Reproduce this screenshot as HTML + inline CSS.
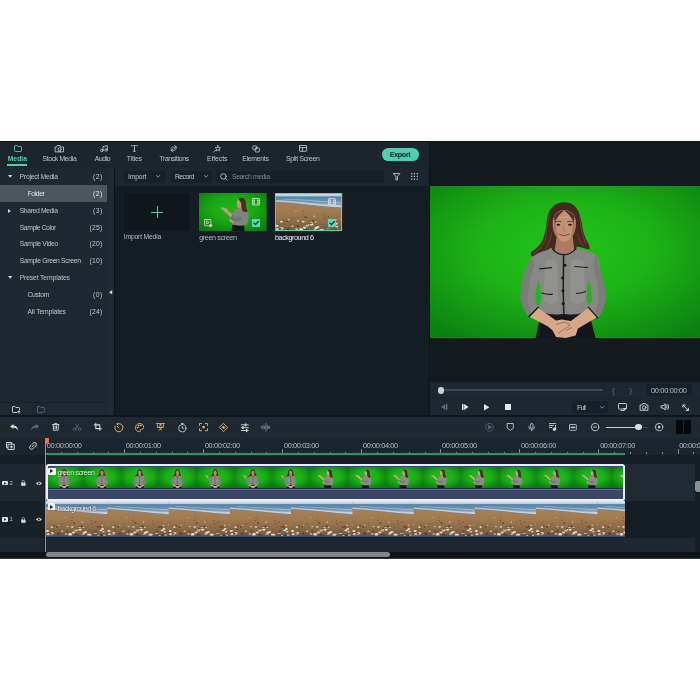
<!DOCTYPE html>
<html><head><meta charset="utf-8"><title>Video Editor</title>
<style>
html,body{margin:0;padding:0;background:#fff;}
body{width:700px;height:700px;position:relative;overflow:hidden;font-family:"Liberation Sans",sans-serif;}
#a div,#a span,#a svg{position:absolute;}
#a span{white-space:nowrap;line-height:1;}
#a{will-change:transform;}
#a svg{overflow:visible;}
</style></head><body><div id="a">
<div style="left:0px;top:140.8px;width:700px;height:417.9px;background:#151d24;"></div>
<div style="left:0px;top:141px;width:429px;height:27px;background:#1c242c;"></div>
<div style="left:0px;top:140.8px;width:700px;height:0.9px;background:#0e1419;"></div>
<div style="left:0px;top:168px;width:114px;height:247px;background:#1e2831;"></div>
<div style="left:107px;top:168px;width:7px;height:247px;background:#202a33;"></div>
<div style="left:0px;top:185.2px;width:107px;height:16.5px;background:#4e565d;"></div>
<div style="left:114px;top:168px;width:1px;height:247px;background:#0d1318;"></div>
<div style="left:115px;top:168px;width:314px;height:17.5px;background:#1c262e;"></div>
<div style="left:115px;top:185.5px;width:314px;height:229.5px;background:#151d24;"></div>
<div style="left:429px;top:141px;width:1.1px;height:275px;background:#0d1318;"></div>
<div style="left:430px;top:141px;width:270px;height:241.5px;background:#131a20;"></div>
<div style="left:430px;top:382px;width:270px;height:33.6px;background:#1d2730;"></div>
<div style="left:430px;top:398px;width:270px;height:0.7px;background:#1a232b;"></div>
<div style="left:0px;top:415px;width:700px;height:1.8px;background:#0f161b;"></div>
<div style="left:0px;top:417px;width:700px;height:21px;background:#1e2830;"></div>
<div style="left:0px;top:438px;width:700px;height:17px;background:#1c252d;"></div>
<div style="left:0px;top:455px;width:700px;height:9px;background:#161e25;"></div>
<div style="left:0px;top:464px;width:45px;height:37px;background:#1e2831;"></div>
<div style="left:45px;top:464px;width:655px;height:37px;background:#202a33;"></div>
<div style="left:0px;top:501px;width:45px;height:37px;background:#182028;"></div>
<div style="left:45px;top:501px;width:655px;height:37px;background:#161e25;"></div>
<div style="left:0px;top:538px;width:700px;height:14px;background:#1e2831;"></div>
<div style="left:0px;top:552px;width:700px;height:6.7px;background:#0e1419;"></div>
<div style="left:0px;top:557.6px;width:700px;height:1.1px;background:#2b353d;"></div>
<div style="left:44px;top:455px;width:1.5px;height:97px;background:#141b21;"></div>
<span style="left:7.70px;top:155.78px;font-size:6.8px;letter-spacing:0.007px;color:#4fcdaa;font-weight:700;">Media</span>
<div style="left:7.4px;top:164.3px;width:19.8px;height:1.7px;background:#4fcdaa;"></div>
<span style="left:42.50px;top:155.78px;font-size:6.8px;letter-spacing:-0.312px;color:#bec4c8;">Stock Media</span>
<span style="left:94.80px;top:155.78px;font-size:6.8px;letter-spacing:-0.398px;color:#bec4c8;">Audio</span>
<span style="left:126.80px;top:155.78px;font-size:6.8px;letter-spacing:-0.159px;color:#bec4c8;">Titles</span>
<span style="left:159.40px;top:155.78px;font-size:6.8px;letter-spacing:-0.320px;color:#bec4c8;">Transitions</span>
<span style="left:207.00px;top:155.78px;font-size:6.8px;letter-spacing:-0.027px;color:#bec4c8;">Effects</span>
<span style="left:242.30px;top:155.78px;font-size:6.8px;letter-spacing:-0.249px;color:#bec4c8;">Elements</span>
<span style="left:286.00px;top:155.78px;font-size:6.8px;letter-spacing:-0.260px;color:#bec4c8;">Split Screen</span>
<svg style="left:13.5px;top:145px;" width="8" height="7" viewBox="0 0 8 7"><g fill="none" stroke="#4fcdaa" stroke-width="0.9" stroke-linecap="round" stroke-linejoin="round"><path d="M0.5 1.2 Q0.5 0.5 1.2 0.5 H3 L3.8 1.5 H6.8 Q7.5 1.5 7.5 2.2 V5.8 Q7.5 6.5 6.8 6.5 H1.2 Q0.5 6.5 0.5 5.8 Z"/></g></svg>
<svg style="left:55.3px;top:144.6px;" width="9" height="7.4" viewBox="0 0 9 7.4"><g fill="none" stroke="#bec4c8" stroke-width="0.9" stroke-linecap="round" stroke-linejoin="round"><path d="M0.5 2 H1.6 L2.2 0.6 H5 L5.6 2 H8.5 V6.9 H0.5 Z"/><circle cx="4.5" cy="4.3" r="1.6"/><path d="M3.4 6.6 Q4.5 5.4 5.6 6.6"/></g></svg>
<svg style="left:99.5px;top:144.8px;" width="8" height="6.8" viewBox="0 0 8 6.8"><g fill="none" stroke="#bec4c8" stroke-width="0.9" stroke-linecap="round" stroke-linejoin="round"><path d="M3 5.3 V1.6 L7.3 0.6 V4.8"/><ellipse cx="1.8" cy="5.5" rx="1.3" ry="1.1"/><ellipse cx="6.1" cy="5" rx="1.3" ry="1.1"/></g></svg>
<span style="left:130.9px;top:142.6px;font-size:11px;font-family:'Liberation Serif',serif;color:#bec4c8">T</span>
<svg style="left:170px;top:144.8px;" width="7.5" height="7.4" viewBox="0 0 7.5 7.4"><g fill="none" stroke="#bec4c8" stroke-width="0.8" stroke-linecap="round" stroke-linejoin="round"><path d="M4.6 0.6 L6.6 2.2 L4.6 3.6 M6.4 2.2 H2.4 L1 3.6 M2.9 6.8 L0.9 5.2 L2.9 3.8 M1.1 5.2 H5.1 L6.5 3.8"/></g></svg>
<svg style="left:212.6px;top:144.6px;" width="8" height="7.6" viewBox="0 0 8 7.6"><g fill="none" stroke="#bec4c8" stroke-width="0.8" stroke-linecap="round" stroke-linejoin="round"><path d="M4.8 0.6 L5.6 2.6 L7.5 2.6 L6 4 L6.6 6 L4.8 4.9 L3.1 6 L3.6 4 L2.2 2.6 L4.1 2.6 Z M2.8 5 L0.6 7.2"/></g></svg>
<svg style="left:251.6px;top:144.6px;" width="8" height="7.6" viewBox="0 0 8 7.6"><g fill="none" stroke="#bec4c8" stroke-width="0.85" stroke-linecap="round" stroke-linejoin="round"><circle cx="2.8" cy="2.8" r="2.2"/><rect x="3.2" y="3" width="4.2" height="4" rx="0.8"/></g></svg>
<svg style="left:299px;top:145px;" width="8.2" height="6.8" viewBox="0 0 8.2 6.8"><g fill="none" stroke="#bec4c8" stroke-width="0.85" stroke-linecap="round" stroke-linejoin="round"><rect x="0.5" y="0.5" width="7.2" height="5.8" rx="0.4"/><path d="M0.5 2.6 H7.7 M3.4 2.6 V6.3"/></g></svg>
<div style="left:381.8px;top:148.2px;width:36.8px;height:12.8px;background:#4ed0ae;border-radius:6.4px;"></div>
<span style="left:389.70px;top:151.17px;font-size:7.2px;letter-spacing:-0.341px;color:#10201f;font-weight:700;">Export</span>
<span style="left:19.60px;top:174.28px;font-size:6.8px;letter-spacing:-0.256px;color:#bec4c8;">Project Media</span>
<span style="left:93.10px;top:174.28px;font-size:6.8px;letter-spacing:0.444px;color:#bec4c8;">(2)</span>
<span style="left:27.50px;top:190.88px;font-size:6.8px;letter-spacing:-0.395px;color:#e4e6e8;">Folder</span>
<span style="left:93.10px;top:190.88px;font-size:6.8px;letter-spacing:0.444px;color:#e4e6e8;">(2)</span>
<span style="left:19.70px;top:207.88px;font-size:6.8px;letter-spacing:-0.367px;color:#bec4c8;">Shared Media</span>
<span style="left:93.10px;top:207.88px;font-size:6.8px;letter-spacing:0.444px;color:#bec4c8;">(3)</span>
<span style="left:19.70px;top:224.68px;font-size:6.8px;letter-spacing:-0.427px;color:#bec4c8;">Sample Color</span>
<span style="left:89.50px;top:224.68px;font-size:6.8px;letter-spacing:0.236px;color:#bec4c8;">(25)</span>
<span style="left:19.70px;top:241.48px;font-size:6.8px;letter-spacing:-0.329px;color:#bec4c8;">Sample Video</span>
<span style="left:89.50px;top:241.48px;font-size:6.8px;letter-spacing:0.236px;color:#bec4c8;">(20)</span>
<span style="left:19.70px;top:258.18px;font-size:6.8px;letter-spacing:-0.332px;color:#bec4c8;">Sample Green Screen</span>
<span style="left:89.50px;top:258.18px;font-size:6.8px;letter-spacing:0.236px;color:#bec4c8;">(10)</span>
<span style="left:19.70px;top:274.98px;font-size:6.8px;letter-spacing:-0.141px;color:#bec4c8;">Preset Templates</span>
<span style="left:27.40px;top:291.88px;font-size:6.8px;letter-spacing:-0.286px;color:#bec4c8;">Custom</span>
<span style="left:93.10px;top:291.88px;font-size:6.8px;letter-spacing:0.444px;color:#bec4c8;">(0)</span>
<span style="left:27.40px;top:308.78px;font-size:6.8px;letter-spacing:-0.143px;color:#bec4c8;">All Templates</span>
<span style="left:89.50px;top:308.78px;font-size:6.8px;letter-spacing:0.236px;color:#bec4c8;">(24)</span>
<svg style="left:7.5px;top:175.2px;" width="4.4" height="2.8" viewBox="0 0 4.4 2.8"><path d="M0 0 H4.4 L2.2 2.8 Z" fill="#d5d8da"/></svg>
<svg style="left:7.5px;top:276px;" width="4.4" height="2.8" viewBox="0 0 4.4 2.8"><path d="M0 0 H4.4 L2.2 2.8 Z" fill="#d5d8da"/></svg>
<svg style="left:8px;top:208.5px;" width="3" height="4" viewBox="0 0 3 4"><path d="M0 0 L3 2 L0 4 Z" fill="#d5d8da"/></svg>
<svg style="left:109.2px;top:289.6px;" width="3.2" height="4.4" viewBox="0 0 3.2 4.4"><path d="M3.2 0 L0 2.2 L3.2 4.4 Z" fill="#d5d8da"/></svg>
<div style="left:0px;top:402.2px;width:107px;height:0.8px;background:#182027;"></div>
<svg style="left:12px;top:406px;" width="9" height="7.4" viewBox="0 0 9 7.4"><g fill="none" stroke="#d5d8da" stroke-width="0.9" stroke-linecap="round" stroke-linejoin="round"><path d="M0.5 1.2 Q0.5 0.5 1.2 0.5 H3 L3.8 1.5 H6.8 Q7.5 1.5 7.5 2.2 V3.6 M4.6 6.5 H1.2 Q0.5 6.5 0.5 5.8 V1.2 M6.8 4.6 V7 M5.6 5.8 H8"/></g></svg>
<svg style="left:37px;top:406px;" width="9" height="7.4" viewBox="0 0 9 7.4"><g fill="none" stroke="#5f686f" stroke-width="0.9" stroke-linecap="round" stroke-linejoin="round"><path d="M0.5 1.2 Q0.5 0.5 1.2 0.5 H3 L3.8 1.5 H6.8 Q7.5 1.5 7.5 2.2 V3.6 M4.6 6.5 H1.2 Q0.5 6.5 0.5 5.8 V1.2 M5.6 5.8 H8"/></g></svg>
<div style="left:123.7px;top:170.7px;width:41px;height:12px;background:#172028;border-radius:2px;"></div>
<span style="left:128.00px;top:173.78px;font-size:6.8px;letter-spacing:-0.154px;color:#bec4c8;">Import</span>
<svg style="left:156.4px;top:175.2px;" width="4.2" height="2.6" viewBox="0 0 4.2 2.6"><g fill="none" stroke="#9aa2a8" stroke-width="0.8" stroke-linecap="round" stroke-linejoin="round"><path d="M0.4 0.4 L2.1 2.1 L3.8 0.4"/></g></svg>
<div style="left:170.5px;top:170.7px;width:41.2px;height:12px;background:#172028;border-radius:2px;"></div>
<span style="left:174.90px;top:173.78px;font-size:6.8px;letter-spacing:-0.504px;color:#bec4c8;">Record</span>
<svg style="left:204px;top:175.2px;" width="4.2" height="2.6" viewBox="0 0 4.2 2.6"><g fill="none" stroke="#9aa2a8" stroke-width="0.8" stroke-linecap="round" stroke-linejoin="round"><path d="M0.4 0.4 L2.1 2.1 L3.8 0.4"/></g></svg>
<div style="left:217.4px;top:170.7px;width:167px;height:12px;background:#172028;border-radius:2px;"></div>
<svg style="left:220.2px;top:173px;" width="7.6" height="7.6" viewBox="0 0 7.6 7.6"><g fill="none" stroke="#b9bfc4" stroke-width="0.9" stroke-linecap="round" stroke-linejoin="round"><circle cx="3.4" cy="3.4" r="2.8"/><path d="M5.5 5.5 L7 7"/></g></svg>
<span style="left:232.00px;top:173.88px;font-size:6.8px;letter-spacing:-0.360px;color:#7d868d;">Search media</span>
<svg style="left:392.6px;top:173px;" width="7.4" height="7.4" viewBox="0 0 7.4 7.4"><g fill="none" stroke="#c9cdd0" stroke-width="0.85" stroke-linecap="round" stroke-linejoin="round"><path d="M0.5 0.5 H6.9 L4.5 3.4 V6.9 H2.9 V3.4 Z"/></g></svg>
<svg style="left:410.9px;top:173.2px;" width="7" height="7" viewBox="0 0 7 7"><g fill="#aeb4b9"><rect x="0" y="0" width="1.3" height="1.3"/><rect x="0" y="2.75" width="1.3" height="1.3"/><rect x="0" y="5.5" width="1.3" height="1.3"/><rect x="2.8" y="0" width="1.3" height="1.3"/><rect x="2.8" y="2.75" width="1.3" height="1.3"/><rect x="2.8" y="5.5" width="1.3" height="1.3"/><rect x="5.6" y="0" width="1.3" height="1.3"/><rect x="5.6" y="2.75" width="1.3" height="1.3"/><rect x="5.6" y="5.5" width="1.3" height="1.3"/></g></svg>
<div style="left:123.6px;top:193.1px;width:66.8px;height:38.2px;background:#10161b;"></div>
<div style="left:151px;top:211.6px;width:12px;height:0.9px;background:#4fcdaa;"></div>
<div style="left:156.55px;top:206px;width:0.9px;height:12px;background:#4fcdaa;"></div>
<span style="left:123.80px;top:234.38px;font-size:6.8px;letter-spacing:-0.198px;color:#b4babe;">Import Media</span>
<span style="left:199.20px;top:233.67px;font-size:7.2px;letter-spacing:-0.384px;color:#b4babe;">green screen</span>
<span style="left:275.00px;top:233.67px;font-size:7.2px;letter-spacing:-0.421px;color:#eceef0;">background 6</span>
<svg style="left:0;top:0" width="0" height="0"><defs><linearGradient id="sk" x1="0" y1="0" x2="0" y2="1"><stop offset="0" stop-color="#dfe9f1"/><stop offset="1" stop-color="#b4c9db"/></linearGradient><linearGradient id="se" x1="0" y1="0" x2="0" y2="1"><stop offset="0" stop-color="#527ea6"/><stop offset="0.55" stop-color="#7598b5"/><stop offset="1" stop-color="#a9bfce"/></linearGradient><linearGradient id="sa" x1="0" y1="0" x2="0" y2="1"><stop offset="0" stop-color="#ad8559"/><stop offset="0.5" stop-color="#a27a50"/><stop offset="0.75" stop-color="#8e6c49"/><stop offset="1" stop-color="#75583d"/></linearGradient><symbol id="bch" viewBox="0 0 68 38" preserveAspectRatio="none"><rect width="68" height="38" fill="url(#sa)"/><path d="M0 3 H68 V14.4 Q50 13.4 34 11.6 T0 8.6 Z" fill="url(#se)"/><rect width="68" height="3.4" fill="url(#sk)"/><path d="M0 7 Q16 7.6 34 9.8 T68 12.4 V14.4 Q50 13.4 34 11.6 T0 8.6 Z" fill="#dde7ee" opacity="0.6"/><path d="M8 5.6 Q30 6.4 50 8.2 L68 9.4 V10.1 L50 8.9 Q30 7.1 8 6.2 Z" fill="#e8f0f4" opacity="0.45"/><path d="M0 8.6 Q16 9.2 34 11.6 T68 14.4 V16.6 Q50 15.2 34 13.4 T0 10.2 Z" fill="#94806c" opacity="0.7"/><ellipse cx="6.2" cy="33.8" rx="1.11" ry="0.66" fill="#6d543c" opacity="0.85"/><ellipse cx="34.0" cy="30.6" rx="1.18" ry="0.71" fill="#4a3a2b" opacity="0.85"/><ellipse cx="67.7" cy="34.5" rx="1.39" ry="0.84" fill="#57422f" opacity="0.85"/><ellipse cx="14.5" cy="36.4" rx="1.54" ry="0.93" fill="#6d543c" opacity="0.85"/><ellipse cx="28.5" cy="28.5" rx="1.36" ry="0.82" fill="#f6f3ec" opacity="0.85"/><ellipse cx="12.1" cy="28.3" rx="1.02" ry="0.61" fill="#3a2f26" opacity="0.85"/><ellipse cx="40.9" cy="28.7" rx="1.01" ry="0.61" fill="#f1ede4" opacity="0.85"/><ellipse cx="17.6" cy="33.0" rx="1.31" ry="0.78" fill="#e2d8c6" opacity="0.85"/><ellipse cx="37.7" cy="31.1" rx="1.37" ry="0.82" fill="#e2d8c6" opacity="0.85"/><ellipse cx="28.7" cy="18.3" rx="0.78" ry="0.47" fill="#57422f" opacity="0.85"/><ellipse cx="63.2" cy="37.5" rx="1.71" ry="1.03" fill="#e2d8c6" opacity="0.85"/><ellipse cx="19.1" cy="36.2" rx="1.16" ry="0.70" fill="#cdbb9f" opacity="0.85"/><ellipse cx="28.0" cy="21.5" rx="0.78" ry="0.47" fill="#4a3a2b" opacity="0.85"/><ellipse cx="60.6" cy="37.6" rx="1.95" ry="1.17" fill="#3a2f26" opacity="0.85"/><ellipse cx="40.1" cy="36.3" rx="1.52" ry="0.91" fill="#cdbb9f" opacity="0.85"/><ellipse cx="32.8" cy="32.1" rx="1.86" ry="1.12" fill="#e2d8c6" opacity="0.85"/><ellipse cx="30.8" cy="24.1" rx="1.21" ry="0.72" fill="#3a2f26" opacity="0.85"/><ellipse cx="53.9" cy="36.1" rx="1.85" ry="1.11" fill="#e2d8c6" opacity="0.85"/><ellipse cx="59.8" cy="32.0" rx="1.63" ry="0.98" fill="#f1ede4" opacity="0.85"/><ellipse cx="30.0" cy="34.4" rx="1.81" ry="1.08" fill="#efeae0" opacity="0.85"/><ellipse cx="21.1" cy="17.9" rx="0.75" ry="0.45" fill="#e2d8c6" opacity="0.85"/><ellipse cx="61.6" cy="30.5" rx="1.66" ry="0.99" fill="#f6f3ec" opacity="0.85"/><ellipse cx="54.7" cy="32.6" rx="1.22" ry="0.73" fill="#57422f" opacity="0.85"/><ellipse cx="39.7" cy="23.0" rx="0.94" ry="0.56" fill="#efeae0" opacity="0.85"/><ellipse cx="48.4" cy="36.9" rx="1.35" ry="0.81" fill="#f1ede4" opacity="0.85"/><ellipse cx="32.1" cy="36.4" rx="1.55" ry="0.93" fill="#4a3a2b" opacity="0.85"/><ellipse cx="66.8" cy="26.0" rx="0.84" ry="0.50" fill="#efeae0" opacity="0.85"/><ellipse cx="36.4" cy="30.1" rx="1.01" ry="0.61" fill="#57422f" opacity="0.85"/><ellipse cx="13.6" cy="26.5" rx="0.85" ry="0.51" fill="#f1ede4" opacity="0.85"/><ellipse cx="34.0" cy="37.9" rx="2.15" ry="1.29" fill="#57422f" opacity="0.85"/><ellipse cx="5.9" cy="36.5" rx="1.29" ry="0.77" fill="#f1ede4" opacity="0.85"/><ellipse cx="13.4" cy="35.5" rx="1.68" ry="1.01" fill="#4a3a2b" opacity="0.85"/><ellipse cx="54.2" cy="36.8" rx="1.86" ry="1.11" fill="#57422f" opacity="0.85"/><ellipse cx="6.7" cy="35.1" rx="2.02" ry="1.21" fill="#e2d8c6" opacity="0.85"/><ellipse cx="21.8" cy="36.0" rx="1.50" ry="0.90" fill="#e2d8c6" opacity="0.85"/><ellipse cx="18.7" cy="36.2" rx="2.05" ry="1.23" fill="#6d543c" opacity="0.85"/><ellipse cx="46.9" cy="36.8" rx="2.18" ry="1.31" fill="#e2d8c6" opacity="0.85"/><ellipse cx="56.5" cy="28.4" rx="1.24" ry="0.75" fill="#4a3a2b" opacity="0.85"/><ellipse cx="59.2" cy="29.4" rx="1.03" ry="0.62" fill="#4a3a2b" opacity="0.85"/><ellipse cx="35.6" cy="28.6" rx="1.27" ry="0.76" fill="#4a3a2b" opacity="0.85"/><ellipse cx="3.0" cy="36.2" rx="2.17" ry="1.30" fill="#e2d8c6" opacity="0.85"/><ellipse cx="33.4" cy="31.2" rx="1.42" ry="0.85" fill="#6d543c" opacity="0.85"/><ellipse cx="62.6" cy="33.6" rx="1.29" ry="0.77" fill="#f1ede4" opacity="0.85"/><ellipse cx="61.2" cy="26.5" rx="0.95" ry="0.57" fill="#efeae0" opacity="0.85"/><ellipse cx="8.3" cy="27.2" rx="0.99" ry="0.59" fill="#4a3a2b" opacity="0.85"/><ellipse cx="58.7" cy="27.7" rx="1.02" ry="0.61" fill="#4a3a2b" opacity="0.85"/><ellipse cx="41.6" cy="34.8" rx="1.83" ry="1.10" fill="#f6f3ec" opacity="0.85"/><ellipse cx="49.4" cy="21.7" rx="0.99" ry="0.59" fill="#6d543c" opacity="0.85"/><ellipse cx="36.9" cy="31.5" rx="1.51" ry="0.91" fill="#efeae0" opacity="0.85"/><ellipse cx="6.5" cy="28.5" rx="1.46" ry="0.88" fill="#f6f3ec" opacity="0.85"/><ellipse cx="34.2" cy="31.1" rx="1.04" ry="0.62" fill="#e2d8c6" opacity="0.85"/><ellipse cx="1.7" cy="32.8" rx="1.83" ry="1.10" fill="#f1ede4" opacity="0.85"/><ellipse cx="57.1" cy="37.8" rx="1.30" ry="0.78" fill="#efeae0" opacity="0.85"/><ellipse cx="9.1" cy="31.0" rx="1.06" ry="0.63" fill="#6d543c" opacity="0.85"/><ellipse cx="50.3" cy="24.9" rx="0.88" ry="0.53" fill="#4a3a2b" opacity="0.85"/><ellipse cx="53.9" cy="23.1" rx="1.10" ry="0.66" fill="#6d543c" opacity="0.85"/><ellipse cx="23.2" cy="32.8" rx="1.14" ry="0.68" fill="#3a2f26" opacity="0.85"/><ellipse cx="38.7" cy="27.7" rx="1.52" ry="0.91" fill="#57422f" opacity="0.85"/><ellipse cx="17.5" cy="24.8" rx="0.89" ry="0.53" fill="#6d543c" opacity="0.85"/><ellipse cx="23.2" cy="27.9" rx="1.22" ry="0.73" fill="#e2d8c6" opacity="0.85"/><ellipse cx="43.4" cy="33.8" rx="1.62" ry="0.97" fill="#efeae0" opacity="0.85"/><ellipse cx="26.3" cy="36.6" rx="2.19" ry="1.31" fill="#f1ede4" opacity="0.85"/><ellipse cx="36.9" cy="29.1" rx="1.27" ry="0.76" fill="#cdbb9f" opacity="0.85"/><ellipse cx="35.8" cy="29.2" rx="1.13" ry="0.68" fill="#cdbb9f" opacity="0.85"/><ellipse cx="26.5" cy="35.7" rx="1.18" ry="0.71" fill="#f6f3ec" opacity="0.85"/><ellipse cx="5.0" cy="35.9" rx="1.63" ry="0.98" fill="#57422f" opacity="0.85"/></symbol></defs></svg>
<svg style="left:0;top:0" width="0" height="0"><defs><symbol id="wp" viewBox="0 0 67.6 38.2" preserveAspectRatio="none"><g transform="translate(-7,0)"><rect x="7" width="67.6" height="38.2" fill="url(#gg)"/><path d="M32.5 38.2 L33.5 31 H45 L45.5 38.2 Z" fill="#15171c"/><path d="M36.5 16.5 Q41 14.5 47 17 Q50.2 19.5 49.8 25 L48 32 Q40 33.5 33 31.5 L33.8 27 L31.4 26 L33.5 20.5 Z" fill="#8b8b88"/><path d="M34 21 L30.5 26 L35 29.5 L43 27 L42 24 L36 25 Z" fill="#7a7a78"/><path d="M29.8 22.4 L22 15.6 L21.4 14.2 L24 14.4 L27.6 15.6 L29 17.6 L33.6 21.4 L31.6 24.6 Z" fill="#d0a184"/><path d="M30.6 25.6 L35 28.8 L34 30 L30.6 28.4 Z" fill="#d0a184"/><path d="M38.2 8 Q38.4 5.4 41.4 5.2 Q43 5.2 43 8 L42.6 13 Q42 15.6 40 15.6 Q38.6 15 38.2 13.2 L37.6 11 Z" fill="#cf9f82"/><path d="M40 15 L43 14 L43.6 17.4 L40.2 17.4 Z" fill="#b98a6c"/><path d="M39.6 5.4 Q43 3.6 45.6 6 Q47.4 9 47 13 Q47.8 16.4 48.6 18.6 Q46 19.6 43.4 18 Q42.4 15 42.4 12 Q42 9 40.6 7.4 Q39.6 6.8 39.6 5.4 Z" fill="#4b2f24"/></g></symbol></defs></svg>
<svg style="left:0;top:0" width="0" height="0"><defs><radialGradient id="gt" cx="0.5" cy="0.45" r="0.62"><stop offset="0" stop-color="#20c018"/><stop offset="0.5" stop-color="#1bb016"/><stop offset="1" stop-color="#0a7a0e"/></radialGradient><symbol id="wpo" viewBox="0 0 67.6 38.2" preserveAspectRatio="none"><g transform="translate(-7,0)"><path d="M32.5 38.2 L33.5 31 H45 L45.5 38.2 Z" fill="#15171c"/><path d="M36.5 16.5 Q41 14.5 47 17 Q50.2 19.5 49.8 25 L48 32 Q40 33.5 33 31.5 L33.8 27 L31.4 26 L33.5 20.5 Z" fill="#8b8b88"/><path d="M34 21 L30.5 26 L35 29.5 L43 27 L42 24 L36 25 Z" fill="#7a7a78"/><path d="M29.8 22.4 L22 15.6 L21.4 14.2 L24 14.4 L27.6 15.6 L29 17.6 L33.6 21.4 L31.6 24.6 Z" fill="#d0a184"/><path d="M30.6 25.6 L35 28.8 L34 30 L30.6 28.4 Z" fill="#d0a184"/><path d="M38.2 8 Q38.4 5.4 41.4 5.2 Q43 5.2 43 8 L42.6 13 Q42 15.6 40 15.6 Q38.6 15 38.2 13.2 L37.6 11 Z" fill="#cf9f82"/><path d="M40 15 L43 14 L43.6 17.4 L40.2 17.4 Z" fill="#b98a6c"/><path d="M39.6 5.4 Q43 3.6 45.6 6 Q47.4 9 47 13 Q47.8 16.4 48.6 18.6 Q46 19.6 43.4 18 Q42.4 15 42.4 12 Q42 9 40.6 7.4 Q39.6 6.8 39.6 5.4 Z" fill="#4b2f24"/></g></symbol></defs></svg>
<svg style="left:199.1px;top:193.1px;" width="67.6" height="38.2" viewBox="0 0 67.6 38.2"><rect width="67.6" height="38.2" fill="url(#gg)"/><path d="M32.5 38.2 L33.5 31 H45 L45.5 38.2 Z" fill="#15171c"/><path d="M36.5 16.5 Q41 14.5 47 17 Q50.2 19.5 49.8 25 L48 32 Q40 33.5 33 31.5 L33.8 27 L31.4 26 L33.5 20.5 Z" fill="#8b8b88"/><path d="M34 21 L30.5 26 L35 29.5 L43 27 L42 24 L36 25 Z" fill="#7a7a78"/><path d="M29.8 22.4 L22 15.6 L21.4 14.2 L24 14.4 L27.6 15.6 L29 17.6 L33.6 21.4 L31.6 24.6 Z" fill="#d0a184"/><path d="M30.6 25.6 L35 28.8 L34 30 L30.6 28.4 Z" fill="#d0a184"/><path d="M38.2 8 Q38.4 5.4 41.4 5.2 Q43 5.2 43 8 L42.6 13 Q42 15.6 40 15.6 Q38.6 15 38.2 13.2 L37.6 11 Z" fill="#cf9f82"/><path d="M40 15 L43 14 L43.6 17.4 L40.2 17.4 Z" fill="#b98a6c"/><path d="M39.6 5.4 Q43 3.6 45.6 6 Q47.4 9 47 13 Q47.8 16.4 48.6 18.6 Q46 19.6 43.4 18 Q42.4 15 42.4 12 Q42 9 40.6 7.4 Q39.6 6.8 39.6 5.4 Z" fill="#4b2f24"/><rect width="67.6" height="38.2" fill="#000" opacity="0.06"/></svg>
<svg style="left:252.1px;top:198.3px;" width="8" height="7.4" viewBox="0 0 8 7.4"><g fill="none" stroke="#dfe6e2" stroke-width="0.7" stroke-linecap="round" stroke-linejoin="round"><rect x="0.5" y="0.5" width="7" height="6.4" rx="0.6"/><path d="M2.2 0.5 V6.9 M5.8 0.5 V6.9 M0.5 2.6 H2.2 M0.5 4.8 H2.2 M5.8 2.6 H7.5 M5.8 4.8 H7.5"/></g></svg>
<div style="left:252px;top:218.9px;width:8px;height:8px;background:#55d8b8;"></div>
<svg style="left:252px;top:218.9px;" width="8" height="8" viewBox="0 0 8 8"><g fill="none" stroke="#12211f" stroke-width="1.3" stroke-linecap="round" stroke-linejoin="round"><path d="M2 4.1 L3.5 5.6 L6.2 2.6"/></g></svg>
<svg style="left:204.2px;top:218.5px;" width="8.4" height="8" viewBox="0 0 8.4 8"><g fill="none" stroke="#dfe6e2" stroke-width="0.7" stroke-linecap="round" stroke-linejoin="round"><rect x="0.5" y="0.5" width="6.4" height="6.2" rx="0.6"/><path d="M2.6 2.2 V5 L4.8 3.6 Z"/><path d="M6 5.6 V8 L8 6.8 Z" fill="#dfe6e2"/></g></svg>
<svg style="left:274.8px;top:193.1px;" width="67.4" height="38.2" viewBox="0 0 67.4 38.2"><use href="#bch" width="67.4" height="38.2"/></svg>
<div style="left:274.8px;top:193.1px;width:67.4px;height:38.2px;background:transparent;box-sizing:border-box;border:1px solid #56d2b2;"></div>
<svg style="left:327.6px;top:197.6px;" width="8" height="7.4" viewBox="0 0 8 7.4"><g fill="none" stroke="#dfe6e2" stroke-width="0.7" stroke-linecap="round" stroke-linejoin="round"><rect x="0.5" y="0.5" width="7" height="6.4" rx="0.6"/><path d="M2.2 0.5 V6.9 M5.8 0.5 V6.9 M0.5 2.6 H2.2 M0.5 4.8 H2.2 M5.8 2.6 H7.5 M5.8 4.8 H7.5"/></g></svg>
<div style="left:327.6px;top:218.6px;width:8px;height:8px;background:#55d8b8;"></div>
<svg style="left:327.6px;top:218.6px;" width="8" height="8" viewBox="0 0 8 8"><g fill="none" stroke="#12211f" stroke-width="1.3" stroke-linecap="round" stroke-linejoin="round"><path d="M2 4.1 L3.5 5.6 L6.2 2.6"/></g></svg>
<svg style="left:0;top:0" width="0" height="0"><defs><radialGradient id="gg" cx="0.5" cy="0.42" r="0.72"><stop offset="0" stop-color="#22c319"/><stop offset="0.45" stop-color="#1db317"/><stop offset="1" stop-color="#0b8010"/></radialGradient><symbol id="wf" viewBox="430 185.5 270 152" preserveAspectRatio="none"><rect x="430" y="185.5" width="270" height="152" fill="url(#gg)"/>
<g>
<path d="M535.5 337.5 L539.5 320 L545 312 H585 L591 320 L595.5 337.5 Z" fill="#14161b"/>
<path d="M564.4 201.8 Q571.6 202 575.6 206.4 Q580.2 212 582 224 Q583 234 588 242.3 Q590.4 246.5 589.2 248.9 Q582 247.2 577 246 L574 252 L554 252 L551.3 247 Q546 250.8 539.9 253.7 Q535 256.4 532 256 Q529.8 253.8 531 251.6 Q539 247 542.4 240 Q546.3 230 546.6 222 Q547.4 211 552.8 206.2 Q557.4 202 564.4 201.8 Z" fill="#44291f"/>
<path d="M549.6 214 Q546.6 228 545.2 240 Q541 248.4 533.6 253.4 M551.6 232 Q550 242 545 249 M579.4 214 Q581 232 586.4 244.6 M577.4 234 Q579.4 241 583.6 246" stroke="#6d4634" stroke-width="1.1" fill="none" opacity="0.85"/>
<path d="M557 234 H572.6 L574.4 252 L564 257 L554.4 252 Z" fill="#ad7c60"/>
<path d="M531 257 Q540 250.5 552.5 248.6 Q564 259 576.4 248 Q590 250 596 254.5 Q599.5 258 600.3 270 L604 285 L606.2 298.5 L603 309 L598 318 L588 306.5 L584.5 312 Q575 316 564 313.8 Q552 316 542.3 312 L538.5 306 L528.5 316.5 L523.5 307.5 L520.2 298.5 L521.3 285 L525 270 Z" fill="#878785"/>
<path d="M545 261 Q552 257 557 261 L558 300 Q550 307 543.6 300 Z M570.6 261 Q577 257 584 261 L585 300 Q577 307 570.6 300 Z" fill="#9c9c98" opacity="0.5"/>
<path d="M531 257 L525 270 L521.3 285 L520.2 298.5 L523.5 307.5 L528.5 316.5 L531.4 313 L527.4 300 L529.4 282 L534.4 264 Z" fill="#777775" opacity="0.7"/>
<path d="M596 254.5 L600.3 270 L604 285 L606.2 298.5 L603 309 L598 318 L595.2 313 L599.2 299 L596.8 282 L593.2 265 Z" fill="#777775" opacity="0.7"/>
<path d="M537.7 279.5 L540.2 285 L541 300 L538.4 305.6 L535.3 301.5 L536 290 Z" fill="#1fb71a"/>
<path d="M589.6 279.5 L587 285 L586.6 300 L589 304.6 L592 301 L591.2 290 Z" fill="#1fb71a"/>
<path d="M552.4 248.7 Q564 260 576.4 248.1" fill="none" stroke="#1d1f26" stroke-width="1.3"/>
<path d="M563.6 254 L563.2 290 L563.8 313.5" fill="none" stroke="#1d1f26" stroke-width="1.5"/>
<path d="M542.3 312 Q552 316.2 563.8 313.8 Q575 316.2 584.5 312" fill="none" stroke="#1d1f26" stroke-width="1.2"/>
<g fill="#15161c"><circle cx="565" cy="264.7" r="1.5"/><circle cx="562.6" cy="277.5" r="1.5"/><circle cx="563" cy="290.2" r="1.5"/><circle cx="563.2" cy="303" r="1.5"/></g>
<g fill="none" stroke="#1d1f26" stroke-width="1.2"><path d="M539.3 268.3 L552 267.2"/><path d="M574.5 266 L588 267"/><path d="M541.5 292.3 Q547 294.5 552.8 293.6"/><path d="M576 293 Q581 293 585.8 291"/></g>
<path d="M528.5 316.5 L538.5 306.5" stroke="#1d1f26" stroke-width="1.6" fill="none"/>
<path d="M598 318 L588 306.5" stroke="#1d1f26" stroke-width="1.6" fill="none"/>
<path d="M530 316.5 L538.5 307.5 L556 320 L562 319 L571 320.5 L588 307.5 L596.5 317 L578 328 L575.6 335 L566 337.4 L556 336.4 L552.6 330 L548 326 Z" fill="#d6a788"/>
<path d="M556 324 L565 321.5 L570 324.5 L564 329 L558 333 M566 330 L572 327" fill="none" stroke="#9a6e55" stroke-width="0.9"/>
<path d="M564.2 209.8 Q570.8 209.8 574 214.6 Q576.4 219 575.8 226 Q575 232.6 571.2 237.4 Q567.6 241 564.4 241.2 Q561 241 557.4 237.4 Q553.6 232.6 552.8 226 Q552.2 219 554.6 214.6 Q557.8 209.8 564.2 209.8 Z" fill="#c39176"/>
<path d="M552.8 223 Q552.8 233 558.6 238.6 Q556 231 556 220 Z M575.8 223 Q575.8 233 570 238.6 Q572.8 231 572.8 220 Z" fill="#9c6e57" opacity="0.7"/>
<path d="M557.6 218 Q564 214.2 571 218 Q564.4 216 557.6 218 Z" fill="#d6a98c" opacity="0.8"/>
<path d="M554 216 Q557 210.4 564.2 210 Q560 213 557 217.4 Q555.4 220 554.6 223 Z M574.6 216 Q571.6 210.4 564.2 210 Q568.6 213 571.4 217.4 Q573 220 573.8 223 Z" fill="#3a231b" opacity="0.85"/>
<ellipse cx="558.4" cy="224.2" rx="1.9" ry="0.95" fill="#2c1a14"/><ellipse cx="570" cy="224.2" rx="1.9" ry="0.95" fill="#2c1a14"/>
<path d="M555.4 221.6 Q558 220 561.2 221.2 M567.2 221.2 Q570.4 220 573 221.6" stroke="#4a2e22" stroke-width="0.8" fill="none"/>
<path d="M558.8 233.6 Q564.2 236.4 569.6 233.6" stroke="#8b4a40" stroke-width="1.1" fill="none"/>
<path d="M563.8 225.6 L563.2 230.2 L565.6 230.6" stroke="#a0705a" stroke-width="0.7" fill="none"/>
</g></symbol><symbol id="wo" viewBox="515 200 96 137.5">
<g>
<path d="M535.5 337.5 L539.5 320 L545 312 H585 L591 320 L595.5 337.5 Z" fill="#14161b"/>
<path d="M564.4 201.8 Q571.6 202 575.6 206.4 Q580.2 212 582 224 Q583 234 588 242.3 Q590.4 246.5 589.2 248.9 Q582 247.2 577 246 L574 252 L554 252 L551.3 247 Q546 250.8 539.9 253.7 Q535 256.4 532 256 Q529.8 253.8 531 251.6 Q539 247 542.4 240 Q546.3 230 546.6 222 Q547.4 211 552.8 206.2 Q557.4 202 564.4 201.8 Z" fill="#44291f"/>
<path d="M549.6 214 Q546.6 228 545.2 240 Q541 248.4 533.6 253.4 M551.6 232 Q550 242 545 249 M579.4 214 Q581 232 586.4 244.6 M577.4 234 Q579.4 241 583.6 246" stroke="#6d4634" stroke-width="1.1" fill="none" opacity="0.85"/>
<path d="M557 234 H572.6 L574.4 252 L564 257 L554.4 252 Z" fill="#ad7c60"/>
<path d="M531 257 Q540 250.5 552.5 248.6 Q564 259 576.4 248 Q590 250 596 254.5 Q599.5 258 600.3 270 L604 285 L606.2 298.5 L603 309 L598 318 L588 306.5 L584.5 312 Q575 316 564 313.8 Q552 316 542.3 312 L538.5 306 L528.5 316.5 L523.5 307.5 L520.2 298.5 L521.3 285 L525 270 Z" fill="#878785"/>
<path d="M545 261 Q552 257 557 261 L558 300 Q550 307 543.6 300 Z M570.6 261 Q577 257 584 261 L585 300 Q577 307 570.6 300 Z" fill="#9c9c98" opacity="0.5"/>
<path d="M531 257 L525 270 L521.3 285 L520.2 298.5 L523.5 307.5 L528.5 316.5 L531.4 313 L527.4 300 L529.4 282 L534.4 264 Z" fill="#777775" opacity="0.7"/>
<path d="M596 254.5 L600.3 270 L604 285 L606.2 298.5 L603 309 L598 318 L595.2 313 L599.2 299 L596.8 282 L593.2 265 Z" fill="#777775" opacity="0.7"/>
<path d="M537.7 279.5 L540.2 285 L541 300 L538.4 305.6 L535.3 301.5 L536 290 Z" fill="#1fb71a"/>
<path d="M589.6 279.5 L587 285 L586.6 300 L589 304.6 L592 301 L591.2 290 Z" fill="#1fb71a"/>
<path d="M552.4 248.7 Q564 260 576.4 248.1" fill="none" stroke="#1d1f26" stroke-width="1.3"/>
<path d="M563.6 254 L563.2 290 L563.8 313.5" fill="none" stroke="#1d1f26" stroke-width="1.5"/>
<path d="M542.3 312 Q552 316.2 563.8 313.8 Q575 316.2 584.5 312" fill="none" stroke="#1d1f26" stroke-width="1.2"/>
<g fill="#15161c"><circle cx="565" cy="264.7" r="1.5"/><circle cx="562.6" cy="277.5" r="1.5"/><circle cx="563" cy="290.2" r="1.5"/><circle cx="563.2" cy="303" r="1.5"/></g>
<g fill="none" stroke="#1d1f26" stroke-width="1.2"><path d="M539.3 268.3 L552 267.2"/><path d="M574.5 266 L588 267"/><path d="M541.5 292.3 Q547 294.5 552.8 293.6"/><path d="M576 293 Q581 293 585.8 291"/></g>
<path d="M528.5 316.5 L538.5 306.5" stroke="#1d1f26" stroke-width="1.6" fill="none"/>
<path d="M598 318 L588 306.5" stroke="#1d1f26" stroke-width="1.6" fill="none"/>
<path d="M530 316.5 L538.5 307.5 L556 320 L562 319 L571 320.5 L588 307.5 L596.5 317 L578 328 L575.6 335 L566 337.4 L556 336.4 L552.6 330 L548 326 Z" fill="#d6a788"/>
<path d="M556 324 L565 321.5 L570 324.5 L564 329 L558 333 M566 330 L572 327" fill="none" stroke="#9a6e55" stroke-width="0.9"/>
<path d="M564.2 209.8 Q570.8 209.8 574 214.6 Q576.4 219 575.8 226 Q575 232.6 571.2 237.4 Q567.6 241 564.4 241.2 Q561 241 557.4 237.4 Q553.6 232.6 552.8 226 Q552.2 219 554.6 214.6 Q557.8 209.8 564.2 209.8 Z" fill="#c39176"/>
<path d="M552.8 223 Q552.8 233 558.6 238.6 Q556 231 556 220 Z M575.8 223 Q575.8 233 570 238.6 Q572.8 231 572.8 220 Z" fill="#9c6e57" opacity="0.7"/>
<path d="M557.6 218 Q564 214.2 571 218 Q564.4 216 557.6 218 Z" fill="#d6a98c" opacity="0.8"/>
<path d="M554 216 Q557 210.4 564.2 210 Q560 213 557 217.4 Q555.4 220 554.6 223 Z M574.6 216 Q571.6 210.4 564.2 210 Q568.6 213 571.4 217.4 Q573 220 573.8 223 Z" fill="#3a231b" opacity="0.85"/>
<ellipse cx="558.4" cy="224.2" rx="1.9" ry="0.95" fill="#2c1a14"/><ellipse cx="570" cy="224.2" rx="1.9" ry="0.95" fill="#2c1a14"/>
<path d="M555.4 221.6 Q558 220 561.2 221.2 M567.2 221.2 Q570.4 220 573 221.6" stroke="#4a2e22" stroke-width="0.8" fill="none"/>
<path d="M558.8 233.6 Q564.2 236.4 569.6 233.6" stroke="#8b4a40" stroke-width="1.1" fill="none"/>
<path d="M563.8 225.6 L563.2 230.2 L565.6 230.6" stroke="#a0705a" stroke-width="0.7" fill="none"/>
</g></symbol></defs></svg>
<svg style="left:430px;top:185.5px;" width="270" height="152" viewBox="0 0 270 152"><use href="#wf" x="0" y="0" width="270" height="152"/></svg>
<div style="left:441px;top:389.4px;width:162px;height:2px;background:#3f4952;border-radius:1px;"></div>
<div style="left:438.2px;top:387.3px;width:6.3px;height:6.3px;background:#d0d3d6;border-radius:50%;"></div>
<span style="left:612.00px;top:386.83px;font-size:8px;letter-spacing:-0.072px;color:#5d666d;">{</span>
<span style="left:629.40px;top:386.83px;font-size:8px;letter-spacing:-0.072px;color:#5d666d;">}</span>
<div style="left:646px;top:384.4px;width:46px;height:11.4px;background:#172028;border-radius:2px;"></div>
<span style="left:651.00px;top:387.26px;font-size:7.4px;letter-spacing:-0.309px;color:#b9bfc4;">00:00:00:00</span>
<svg style="left:441.2px;top:404.4px;" width="6.6" height="6" viewBox="0 0 6.6 6"><path d="M4.3 0 V6 L0 3 Z" fill="#5e676e"/><rect x="5" y="0" width="1.4" height="6" fill="#5e676e"/></svg>
<svg style="left:462.4px;top:404.4px;" width="6.6" height="6" viewBox="0 0 6.6 6"><rect x="0" y="0" width="1.5" height="6" fill="#e6e8ea"/><path d="M2.2 0 L6.5 3 L2.2 6 Z" fill="#e6e8ea"/></svg>
<svg style="left:484.4px;top:404.2px;" width="6" height="6.4" viewBox="0 0 6 6.4"><path d="M0 0 L5.4 3.2 L0 6.4 Z" fill="#e6e8ea"/></svg>
<div style="left:505.2px;top:404.4px;width:5.4px;height:5.4px;background:#e6e8ea;"></div>
<div style="left:572.4px;top:401.4px;width:35.6px;height:11.8px;background:#172028;border-radius:2px;"></div>
<span style="left:577.00px;top:404.26px;font-size:7.4px;letter-spacing:-0.975px;color:#bec4c8;">Full</span>
<svg style="left:599.8px;top:406px;" width="4.4" height="2.8" viewBox="0 0 4.4 2.8"><g fill="none" stroke="#9aa2a8" stroke-width="0.8" stroke-linecap="round" stroke-linejoin="round"><path d="M0.4 0.4 L2.2 2.2 L4 0.4"/></g></svg>
<svg style="left:618.2px;top:403.4px;" width="9" height="8" viewBox="0 0 9 8"><g fill="none" stroke="#d5d8da" stroke-width="0.9" stroke-linecap="round" stroke-linejoin="round"><rect x="0.5" y="0.5" width="8" height="5.6" rx="0.8"/><path d="M3 7.6 H6"/></g></svg>
<svg style="left:623.4px;top:408.4px;" width="3.6" height="2.6" viewBox="0 0 3.6 2.6"><path d="M0 0 H3.6 L1.8 2.4 Z" fill="#d5d8da"/></svg>
<svg style="left:640px;top:403.4px;" width="8.4" height="7.8" viewBox="0 0 8.4 7.8"><g fill="none" stroke="#d5d8da" stroke-width="0.9" stroke-linecap="round" stroke-linejoin="round"><path d="M0.5 2 H2 L2.7 0.6 H5.7 L6.4 2 H7.9 V7.3 H0.5 Z"/><circle cx="4.2" cy="4.5" r="1.7"/></g></svg>
<svg style="left:661px;top:403.4px;" width="9" height="8" viewBox="0 0 9 8"><g fill="none" stroke="#d5d8da" stroke-width="0.9" stroke-linecap="round" stroke-linejoin="round"><path d="M0.5 2.8 H2 L4.2 0.8 V7 L2 5 H0.5 Z"/><path d="M5.6 2.6 Q6.6 3.9 5.6 5.2 M6.9 1.4 Q8.7 3.9 6.9 6.4"/></g></svg>
<svg style="left:682px;top:403.8px;" width="7.4" height="7.4" viewBox="0 0 7.4 7.4"><g fill="none" stroke="#d5d8da" stroke-width="0.95" stroke-linecap="round" stroke-linejoin="round"><path d="M1 1 L6.4 6.4 M1 3.2 V1 H3.2 M6.4 4.2 V6.4 H4.2"/></g></svg>
<svg style="left:9.8px;top:424px;" width="8.4" height="6.4" viewBox="0 0 8.4 6.4"><path d="M0 2.4 L3.4 0 V1.5 Q7.6 1.6 8.2 6.2 Q6.4 3.6 3.4 3.5 V5 Z" fill="#d5d8da"/></svg>
<svg style="left:30.6px;top:424px;" width="8.4" height="6.4" viewBox="0 0 8.4 6.4"><path d="M8.2 2.4 L4.8 0 V1.5 Q0.6 1.6 0 6.2 Q1.8 3.6 4.8 3.5 V5 Z" fill="#5f6870"/></svg>
<svg style="left:52.2px;top:423.2px;" width="7.6" height="7.8" viewBox="0 0 7.6 7.8"><g fill="none" stroke="#d5d8da" stroke-width="0.9" stroke-linecap="round" stroke-linejoin="round"><path d="M0.5 1.6 H7 M2.6 1.6 V0.5 H4.9 V1.6 M1.3 1.6 V7.2 H6.2 V1.6 M3 3 V5.8 M4.5 3 V5.8"/></g></svg>
<svg style="left:72.8px;top:424px;" width="8.4" height="7" viewBox="0 0 8.4 7"><g fill="none" stroke="#5f6870" stroke-width="0.8" stroke-linecap="round" stroke-linejoin="round"><circle cx="1.7" cy="5.3" r="1.3"/><circle cx="6.5" cy="5.3" r="1.3"/><path d="M2.6 4.4 L5.6 0.4 M5.6 4.4 L2.6 0.4"/></g></svg>
<svg style="left:94px;top:423.2px;" width="7.8" height="7.6" viewBox="0 0 7.8 7.6"><g fill="none" stroke="#d5d8da" stroke-width="1.1" stroke-linecap="round" stroke-linejoin="round"><path d="M1.8 0.4 V5.6 H7.3 M0.3 1.9 H5.8 V7.2"/></g></svg>
<svg style="left:114px;top:422.8px;" width="9.4" height="9.4" viewBox="0 0 9.4 9.4"><g fill="none" stroke="#dcae72" stroke-width="1" stroke-linecap="round" stroke-linejoin="round"><path d="M3.2 0.9 A4.1 4.1 0 1 1 1.1 3 M3.6 0.2 L2.8 1.1 L3.9 1.9 M4.7 4.9 L3.3 3.3"/></g></svg>
<svg style="left:135px;top:422.5px;" width="9.2" height="9.2" viewBox="0 0 9.2 9.2"><g fill="none" stroke="#dcae72" stroke-width="0.9" stroke-linecap="round" stroke-linejoin="round"><path d="M4.6 0.5 A4.1 4.1 0 1 0 4.6 8.7 Q5.8 8.6 5.4 7.4 Q5.2 6.2 6.6 6.2 H7.4 Q8.8 6 8.7 4.4 A4.1 4.1 0 0 0 4.6 0.5 Z"/><circle cx="2.6" cy="4.6" r="0.5"/><circle cx="3.6" cy="2.6" r="0.5"/><circle cx="5.8" cy="2.6" r="0.5"/></g></svg>
<svg style="left:156.4px;top:423.4px;" width="8.8" height="7.8" viewBox="0 0 8.8 7.8"><g fill="none" stroke="#dcae72" stroke-width="0.85" stroke-linecap="round" stroke-linejoin="round"><path d="M0.3 0.5 H8.5 M1.4 0.5 V4.6 H7.4 V0.5 M2.8 4.4 Q2.9 2.6 4.4 2.6 Q5.9 2.6 6 4.4 M4.4 4.8 V6.2 M3 7.2 L4.4 6 L5.8 7.2"/><circle cx="4.4" cy="1.7" r="0.6"/></g></svg>
<svg style="left:177.6px;top:422.8px;" width="8.8" height="9.4" viewBox="0 0 8.8 9.4"><g fill="none" stroke="#c3c8cd" stroke-width="0.9" stroke-linecap="round" stroke-linejoin="round"><circle cx="4.3" cy="5.2" r="3.7"/><path d="M3.4 0.5 H5.2 M4.3 0.6 V1.5 M4.3 3.4 V5.3 H6"/></g></svg>
<svg style="left:198.5px;top:422.8px;" width="9" height="8.2" viewBox="0 0 9 8.2"><g fill="none" stroke="#dcae72" stroke-width="0.95" stroke-linecap="round" stroke-linejoin="round"><path d="M0.5 2.4 V0.5 H2.6 M6.4 0.5 H8.5 V2.4 M8.5 5.8 V7.7 H6.4 M2.6 7.7 H0.5 V5.8"/><circle cx="4.5" cy="4.1" r="0.9" fill="#dcae72"/></g></svg>
<svg style="left:219.3px;top:422.9px;" width="9.2" height="9.2" viewBox="0 0 9.2 9.2"><g fill="none" stroke="#dcae72" stroke-width="0.9" stroke-linecap="round" stroke-linejoin="round"><path d="M4.6 0.6 L8.6 4.6 L4.6 8.6 L0.6 4.6 Z"/><path d="M4.6 3.3 L5.9 4.6 L4.6 5.9 L3.3 4.6 Z" fill="#dcae72"/></g></svg>
<svg style="left:241.4px;top:423.6px;" width="7.6" height="7.4" viewBox="0 0 7.6 7.4"><g fill="none" stroke="#d5d8da" stroke-width="0.95" stroke-linecap="round" stroke-linejoin="round"><path d="M0.3 0.9 H7.3 M0.3 3.7 H7.3 M0.3 6.5 H7.3"/><path d="M4.6 0 V1.8 M2 2.8 V4.6 M5.6 5.6 V7.4" stroke-width="1.5"/></g></svg>
<svg style="left:261px;top:423px;" width="9" height="8.4" viewBox="0 0 9 8.4"><g fill="none" stroke="#6b747c" stroke-width="1.1" stroke-linecap="round" stroke-linejoin="round"><path d="M0.5 3.4 V5 M2 2.4 V6 M3.5 3 V5.4 M4.9 0.4 V8 M6.4 2.4 V6 M7.8 3 V5.4 M8.8 3.8 V4.6"/></g></svg>
<svg style="left:485px;top:423px;" width="8.8" height="8.6" viewBox="0 0 8.8 8.6"><g fill="none" stroke="#5f6870" stroke-width="0.8" stroke-linecap="round" stroke-linejoin="round"><circle cx="4.4" cy="4.3" r="3.9" stroke-dasharray="1.1 0.9"/><path d="M3.4 2.6 V6 L6.2 4.3 Z" fill="#5f6870"/></g></svg>
<svg style="left:506.6px;top:423px;" width="6.8" height="8" viewBox="0 0 6.8 8"><g fill="none" stroke="#b9bfc5" stroke-width="0.95" stroke-linecap="round" stroke-linejoin="round"><path d="M0.5 0.5 H6.3 V5.2 L3.4 7.4 L0.5 5.2 Z"/></g></svg>
<svg style="left:528px;top:423px;" width="7.4" height="8.2" viewBox="0 0 7.4 8.2"><g fill="none" stroke="#b9bfc5" stroke-width="0.9" stroke-linecap="round" stroke-linejoin="round"><rect x="2.3" y="0.5" width="2.8" height="4.6" rx="1.4"/><path d="M0.6 3.8 Q0.7 6.4 3.7 6.4 Q6.7 6.4 6.8 3.8 M3.7 6.4 V7.8"/></g></svg>
<svg style="left:548.8px;top:423px;" width="7.6" height="8" viewBox="0 0 7.6 8"><g fill="none" stroke="#d5d8da" stroke-width="0.9" stroke-linecap="round" stroke-linejoin="round"><path d="M0.4 0.6 H6.8 M0.4 2.6 H4.4 M0.4 4.6 H2.8 M6.6 2.4 V6"/><circle cx="5.4" cy="6.2" r="1.3" fill="#d5d8da"/></g></svg>
<svg style="left:569.2px;top:423.6px;" width="8" height="7" viewBox="0 0 8 7"><g fill="none" stroke="#b9bfc5" stroke-width="0.9" stroke-linecap="round" stroke-linejoin="round"><rect x="0.5" y="0.5" width="6.8" height="5.8" rx="0.7"/><path d="M2.2 3.4 H3.4 M4.4 3.4 H5.6" stroke-width="1.6"/></g></svg>
<svg style="left:590.8px;top:423.2px;" width="8.4" height="8.4" viewBox="0 0 8.4 8.4"><g fill="none" stroke="#c9cdd1" stroke-width="0.9" stroke-linecap="round" stroke-linejoin="round"><circle cx="4.1" cy="4.1" r="3.7"/><path d="M2.6 4.1 H5.6"/></g></svg>
<div style="left:606px;top:426.6px;width:42px;height:1.3px;background:#3a444c;"></div>
<div style="left:606px;top:426.6px;width:32.5px;height:1.3px;background:#c9cdd1;"></div>
<div style="left:635.4px;top:424.2px;width:6.2px;height:6.2px;background:#d9dcde;border-radius:50%;"></div>
<svg style="left:654.8px;top:423px;" width="8.4" height="8.4" viewBox="0 0 8.4 8.4"><g fill="none" stroke="#c9cdd1" stroke-width="0.9" stroke-linecap="round" stroke-linejoin="round"><circle cx="4.1" cy="4.1" r="3.7"/><circle cx="4.1" cy="4.1" r="1.3" fill="#c9cdd1" stroke="none"/></g></svg>
<div style="left:676.3px;top:420px;width:6.7px;height:14.3px;background:#04080a;"></div>
<div style="left:683.6px;top:420px;width:7.4px;height:14.3px;background:#04080a;"></div>
<svg style="left:6.2px;top:442px;" width="8.8" height="8" viewBox="0 0 8.8 8"><g fill="none" stroke="#d5d8da" stroke-width="0.95" stroke-linecap="round" stroke-linejoin="round"><path d="M1.6 5.6 H0.5 V0.5 H5.8 V1.6"/><rect x="2.4" y="2.2" width="5.8" height="5.3"/><path d="M5.3 3.6 V6.2 M4 4.9 H6.6"/></g></svg>
<svg style="left:28.8px;top:442.2px;" width="8.4" height="7.8" viewBox="0 0 8.4 7.8"><g fill="none" stroke="#d5d8da" stroke-width="0.95" stroke-linecap="round" stroke-linejoin="round"><path d="M3.2 2.2 L4.4 1 Q5.8 -0.1 7.1 1.1 Q8.2 2.4 7 3.8 L6 4.8 M5 5.6 L3.8 6.8 Q2.4 7.9 1.1 6.7 Q0 5.4 1.2 4 L2.2 3 M3 4.9 L5.2 2.8"/></g></svg>
<div style="left:45.1px;top:449px;width:1px;height:5px;background:#7d868d;"></div>
<div style="left:60.91px;top:451.6px;width:1px;height:2.6px;background:#7d868d;"></div>
<div style="left:76.72px;top:451.6px;width:1px;height:2.6px;background:#7d868d;"></div>
<div style="left:92.53px;top:451.6px;width:1px;height:2.6px;background:#7d868d;"></div>
<div style="left:108.34px;top:451.6px;width:1px;height:2.6px;background:#7d868d;"></div>
<span style="left:46.80px;top:442.46px;font-size:7.4px;letter-spacing:-0.389px;color:#b3bac0;">00:00:00:00</span>
<div style="left:124.15px;top:449px;width:1px;height:5px;background:#7d868d;"></div>
<div style="left:139.96px;top:451.6px;width:1px;height:2.6px;background:#7d868d;"></div>
<div style="left:155.77px;top:451.6px;width:1px;height:2.6px;background:#7d868d;"></div>
<div style="left:171.58px;top:451.6px;width:1px;height:2.6px;background:#7d868d;"></div>
<div style="left:187.39px;top:451.6px;width:1px;height:2.6px;background:#7d868d;"></div>
<span style="left:125.85px;top:442.46px;font-size:7.4px;letter-spacing:-0.389px;color:#b3bac0;">00:00:01:00</span>
<div style="left:203.2px;top:449px;width:1px;height:5px;background:#7d868d;"></div>
<div style="left:219.01px;top:451.6px;width:1px;height:2.6px;background:#7d868d;"></div>
<div style="left:234.82px;top:451.6px;width:1px;height:2.6px;background:#7d868d;"></div>
<div style="left:250.63px;top:451.6px;width:1px;height:2.6px;background:#7d868d;"></div>
<div style="left:266.44px;top:451.6px;width:1px;height:2.6px;background:#7d868d;"></div>
<span style="left:204.90px;top:442.46px;font-size:7.4px;letter-spacing:-0.389px;color:#b3bac0;">00:00:02:00</span>
<div style="left:282.25px;top:449px;width:1px;height:5px;background:#7d868d;"></div>
<div style="left:298.06px;top:451.6px;width:1px;height:2.6px;background:#7d868d;"></div>
<div style="left:313.87px;top:451.6px;width:1px;height:2.6px;background:#7d868d;"></div>
<div style="left:329.68px;top:451.6px;width:1px;height:2.6px;background:#7d868d;"></div>
<div style="left:345.49px;top:451.6px;width:1px;height:2.6px;background:#7d868d;"></div>
<span style="left:283.95px;top:442.46px;font-size:7.4px;letter-spacing:-0.389px;color:#b3bac0;">00:00:03:00</span>
<div style="left:361.3px;top:449px;width:1px;height:5px;background:#7d868d;"></div>
<div style="left:377.11px;top:451.6px;width:1px;height:2.6px;background:#7d868d;"></div>
<div style="left:392.92px;top:451.6px;width:1px;height:2.6px;background:#7d868d;"></div>
<div style="left:408.73px;top:451.6px;width:1px;height:2.6px;background:#7d868d;"></div>
<div style="left:424.54px;top:451.6px;width:1px;height:2.6px;background:#7d868d;"></div>
<span style="left:363.00px;top:442.46px;font-size:7.4px;letter-spacing:-0.389px;color:#b3bac0;">00:00:04:00</span>
<div style="left:440.35px;top:449px;width:1px;height:5px;background:#7d868d;"></div>
<div style="left:456.16px;top:451.6px;width:1px;height:2.6px;background:#7d868d;"></div>
<div style="left:471.97px;top:451.6px;width:1px;height:2.6px;background:#7d868d;"></div>
<div style="left:487.78px;top:451.6px;width:1px;height:2.6px;background:#7d868d;"></div>
<div style="left:503.59px;top:451.6px;width:1px;height:2.6px;background:#7d868d;"></div>
<span style="left:442.05px;top:442.46px;font-size:7.4px;letter-spacing:-0.389px;color:#b3bac0;">00:00:05:00</span>
<div style="left:519.4px;top:449px;width:1px;height:5px;background:#7d868d;"></div>
<div style="left:535.21px;top:451.6px;width:1px;height:2.6px;background:#7d868d;"></div>
<div style="left:551.02px;top:451.6px;width:1px;height:2.6px;background:#7d868d;"></div>
<div style="left:566.83px;top:451.6px;width:1px;height:2.6px;background:#7d868d;"></div>
<div style="left:582.64px;top:451.6px;width:1px;height:2.6px;background:#7d868d;"></div>
<span style="left:521.10px;top:442.46px;font-size:7.4px;letter-spacing:-0.389px;color:#b3bac0;">00:00:06:00</span>
<div style="left:598.45px;top:449px;width:1px;height:5px;background:#7d868d;"></div>
<div style="left:614.26px;top:451.6px;width:1px;height:2.6px;background:#7d868d;"></div>
<div style="left:630.07px;top:451.6px;width:1px;height:2.6px;background:#7d868d;"></div>
<div style="left:645.88px;top:451.6px;width:1px;height:2.6px;background:#7d868d;"></div>
<div style="left:661.69px;top:451.6px;width:1px;height:2.6px;background:#7d868d;"></div>
<span style="left:600.15px;top:442.46px;font-size:7.4px;letter-spacing:-0.389px;color:#b3bac0;">00:00:07:00</span>
<div style="left:677.5px;top:449px;width:1px;height:5px;background:#7d868d;"></div>
<div style="left:693.31px;top:451.6px;width:1px;height:2.6px;background:#7d868d;"></div>
<span style="left:679.20px;top:442.46px;font-size:7.4px;letter-spacing:-0.482px;color:#b3bac0;">00:00:0</span>
<div style="left:46px;top:452.9px;width:578.6px;height:2.2px;background:#27985a;"></div>
<div style="left:46.4px;top:464.3px;width:578.2px;height:36.6px;background:#3b4668;border-radius:2px;overflow:hidden;"><svg style="left:0;top:2.3px" width="578.2" height="21.2"><rect x="-0.60" y="0" width="38.05" height="21.4" fill="url(#gt)"/><use href="#wo" x="11.28" y="2.04" width="13.42" height="19.36"/><rect x="37.15" y="0" width="38.05" height="21.4" fill="url(#gt)"/><use href="#wo" x="49.03" y="2.04" width="13.42" height="19.36"/><rect x="74.90" y="0" width="38.05" height="21.4" fill="url(#gt)"/><use href="#wo" x="86.78" y="2.04" width="13.42" height="19.36"/><rect x="112.65" y="0" width="38.05" height="21.4" fill="url(#gt)"/><use href="#wo" x="124.53" y="2.04" width="13.42" height="19.36"/><rect x="150.40" y="0" width="38.05" height="21.4" fill="url(#gt)"/><use href="#wo" x="162.28" y="2.04" width="13.42" height="19.36"/><path d="M165.17 11.2 L163.38 13 L161.57 10.2" fill="none" stroke="#858583" stroke-width="1.5"/><path d="M161.78 10.6 L160.17 8.4" fill="none" stroke="#d6a788" stroke-width="1.3"/><rect x="188.15" y="0" width="38.05" height="21.4" fill="url(#gt)"/><use href="#wo" x="200.03" y="2.04" width="13.42" height="19.36"/><path d="M202.92 11.2 L201.12 13 L199.32 10.2" fill="none" stroke="#858583" stroke-width="1.5"/><path d="M199.53 10.6 L197.92 8.4" fill="none" stroke="#d6a788" stroke-width="1.3"/><rect x="225.90" y="0" width="38.05" height="21.4" fill="url(#gt)"/><use href="#wo" x="237.78" y="2.04" width="13.42" height="19.36"/><path d="M240.67 11.2 L238.88 13 L237.07 10.2" fill="none" stroke="#858583" stroke-width="1.5"/><path d="M237.28 10.6 L235.67 8.4" fill="none" stroke="#d6a788" stroke-width="1.3"/><rect x="263.65" y="0" width="38.05" height="21.4" fill="url(#gt)"/><use href="#wpo" x="263.65" y="0" width="37.75" height="21.4"/><rect x="301.40" y="0" width="38.05" height="21.4" fill="url(#gt)"/><use href="#wpo" x="301.40" y="0" width="37.75" height="21.4"/><rect x="339.15" y="0" width="38.05" height="21.4" fill="url(#gt)"/><use href="#wpo" x="339.15" y="0" width="37.75" height="21.4"/><rect x="376.90" y="0" width="38.05" height="21.4" fill="url(#gt)"/><use href="#wpo" x="376.90" y="0" width="37.75" height="21.4"/><rect x="414.65" y="0" width="38.05" height="21.4" fill="url(#gt)"/><use href="#wpo" x="414.65" y="0" width="37.75" height="21.4"/><rect x="452.40" y="0" width="38.05" height="21.4" fill="url(#gt)"/><use href="#wpo" x="452.40" y="0" width="37.75" height="21.4"/><rect x="490.15" y="0" width="38.05" height="21.4" fill="url(#gt)"/><use href="#wpo" x="490.15" y="0" width="37.75" height="21.4"/><rect x="527.90" y="0" width="38.05" height="21.4" fill="url(#gt)"/><use href="#wpo" x="527.90" y="0" width="37.75" height="21.4"/><rect x="565.65" y="0" width="38.05" height="21.4" fill="url(#gt)"/><use href="#wpo" x="565.65" y="0" width="37.75" height="21.4"/></svg><div style="left:0;top:23.4px;width:100%;height:1px;background:#262e48"></div><div style="left:0;top:24.4px;width:100%;height:1.5px;background:#5d6a8c"></div><div style="left:0;top:0;width:100%;height:100%;box-sizing:border-box;border:2.2px solid #eceef4;border-radius:2.6px;"></div></div>
<div style="left:46.4px;top:501px;width:578.2px;height:36.2px;background:#34497a;overflow:hidden;"><svg style="left:0;top:0" width="578.2" height="34.8"><use href="#bch" x="0.00" y="0" width="62.45" height="34.8"/><use href="#bch" x="61.25" y="0" width="62.45" height="34.8"/><use href="#bch" x="122.50" y="0" width="62.45" height="34.8"/><use href="#bch" x="183.75" y="0" width="62.45" height="34.8"/><use href="#bch" x="245.00" y="0" width="62.45" height="34.8"/><use href="#bch" x="306.25" y="0" width="62.45" height="34.8"/><use href="#bch" x="367.50" y="0" width="62.45" height="34.8"/><use href="#bch" x="428.75" y="0" width="62.45" height="34.8"/><use href="#bch" x="490.00" y="0" width="62.45" height="34.8"/><use href="#bch" x="551.25" y="0" width="62.45" height="34.8"/></svg><div style="left:0;top:0;width:100%;height:0.9px;background:#dbe5ee;opacity:.85"></div></div>
<div style="left:48.4px;top:467.9px;width:7.2px;height:7px;background:#f2f3f4;border-radius:0.8px;"></div>
<svg style="left:50.4px;top:469.4px;" width="3.4" height="4" viewBox="0 0 3.4 4"><path d="M0 0 L3.2 2 L0 4 Z" fill="#1d2a22"/></svg>
<div style="left:48.2px;top:503.2px;width:7.2px;height:7px;background:#f2f3f4;border-radius:0.8px;"></div>
<svg style="left:50.2px;top:504.7px;" width="3.4" height="4" viewBox="0 0 3.4 4"><path d="M0 0 L3.2 2 L0 4 Z" fill="#1d2a22"/></svg>
<span style="left:57.50px;top:468.65px;font-size:7.6px;letter-spacing:-0.624px;color:#e4ece4;text-shadow:0 0 1.5px rgba(0,0,0,.75);">green screen</span>
<span style="left:57.50px;top:504.65px;font-size:7.6px;letter-spacing:-0.642px;color:#e6eaee;text-shadow:0 0 1.5px rgba(0,0,0,.75);">background 6</span>
<div style="left:2.1px;top:480.6px;width:5.8px;height:4.5px;background:#e2e5e7;border-radius:1px;"></div>
<svg style="left:4px;top:481.5px;" width="2.6" height="2.8" viewBox="0 0 2.6 2.8"><path d="M0 0 L2.4 1.4 L0 2.8 Z" fill="#1e2831"/></svg>
<span style="left:9.40px;top:480.73px;font-size:5.8px;letter-spacing:-1.226px;color:#b9bfc4;">2</span>
<svg style="left:20.6px;top:480px;" width="4.8" height="6" viewBox="0 0 4.8 6"><g fill="none" stroke="#d5d8da" stroke-width="0.65" stroke-linecap="round" stroke-linejoin="round"><path d="M1.2 2.8 V1.7 Q1.3 0.5 2.4 0.5 Q3.5 0.5 3.6 1.7 V2.8"/><rect x="0.5" y="3" width="3.8" height="2.6" rx="0.4" fill="#d5d8da"/></g></svg>
<svg style="left:36.4px;top:480.8px;" width="6" height="4.8" viewBox="0 0 6 4.8"><g fill="none" stroke="#d5d8da" stroke-width="0.5" stroke-linecap="round" stroke-linejoin="round"><path d="M0.3 2.4 Q2.9 -0.6 5.6 2.4 Q2.9 5.4 0.3 2.4 Z" fill="#d5d8da"/><circle cx="2.95" cy="2.4" r="1" fill="#1e2831" stroke="none"/></g></svg>
<div style="left:2.1px;top:517.2px;width:5.8px;height:4.5px;background:#e2e5e7;border-radius:1px;"></div>
<svg style="left:4px;top:518.1px;" width="2.6" height="2.8" viewBox="0 0 2.6 2.8"><path d="M0 0 L2.4 1.4 L0 2.8 Z" fill="#1e2831"/></svg>
<span style="left:9.40px;top:517.33px;font-size:5.8px;letter-spacing:-1.226px;color:#b9bfc4;">1</span>
<svg style="left:20.6px;top:516.6px;" width="4.8" height="6" viewBox="0 0 4.8 6"><g fill="none" stroke="#d5d8da" stroke-width="0.65" stroke-linecap="round" stroke-linejoin="round"><path d="M1.2 2.8 V1.7 Q1.3 0.5 2.4 0.5 Q3.5 0.5 3.6 1.7 V2.8"/><rect x="0.5" y="3" width="3.8" height="2.6" rx="0.4" fill="#d5d8da"/></g></svg>
<svg style="left:36.4px;top:517.4px;" width="6" height="4.8" viewBox="0 0 6 4.8"><g fill="none" stroke="#d5d8da" stroke-width="0.5" stroke-linecap="round" stroke-linejoin="round"><path d="M0.3 2.4 Q2.9 -0.6 5.6 2.4 Q2.9 5.4 0.3 2.4 Z" fill="#d5d8da"/><circle cx="2.95" cy="2.4" r="1" fill="#1e2831" stroke="none"/></g></svg>
<div style="left:45.2px;top:455px;width:1px;height:97px;background:#c98b4f;"></div>
<svg style="left:45.1px;top:437.6px;" width="4" height="6.8" viewBox="0 0 4 6.8"><path d="M0 0 H3.9 V4.6 L0.6 6.8 H0 Z" fill="#f26b5b"/></svg>
<div style="left:45.1px;top:444px;width:1px;height:11px;background:#c98b4f;"></div>
<div style="left:45.6px;top:552.3px;width:344.4px;height:5px;background:#80868c;border-radius:2.5px;"></div>
<div style="left:694.5px;top:455px;width:5.5px;height:97px;background:#171f26;"></div>
<div style="left:695.2px;top:481px;width:4.8px;height:11px;background:#8b9095;border-radius:2.4px 0 0 2.4px;"></div>
</div></body></html>
